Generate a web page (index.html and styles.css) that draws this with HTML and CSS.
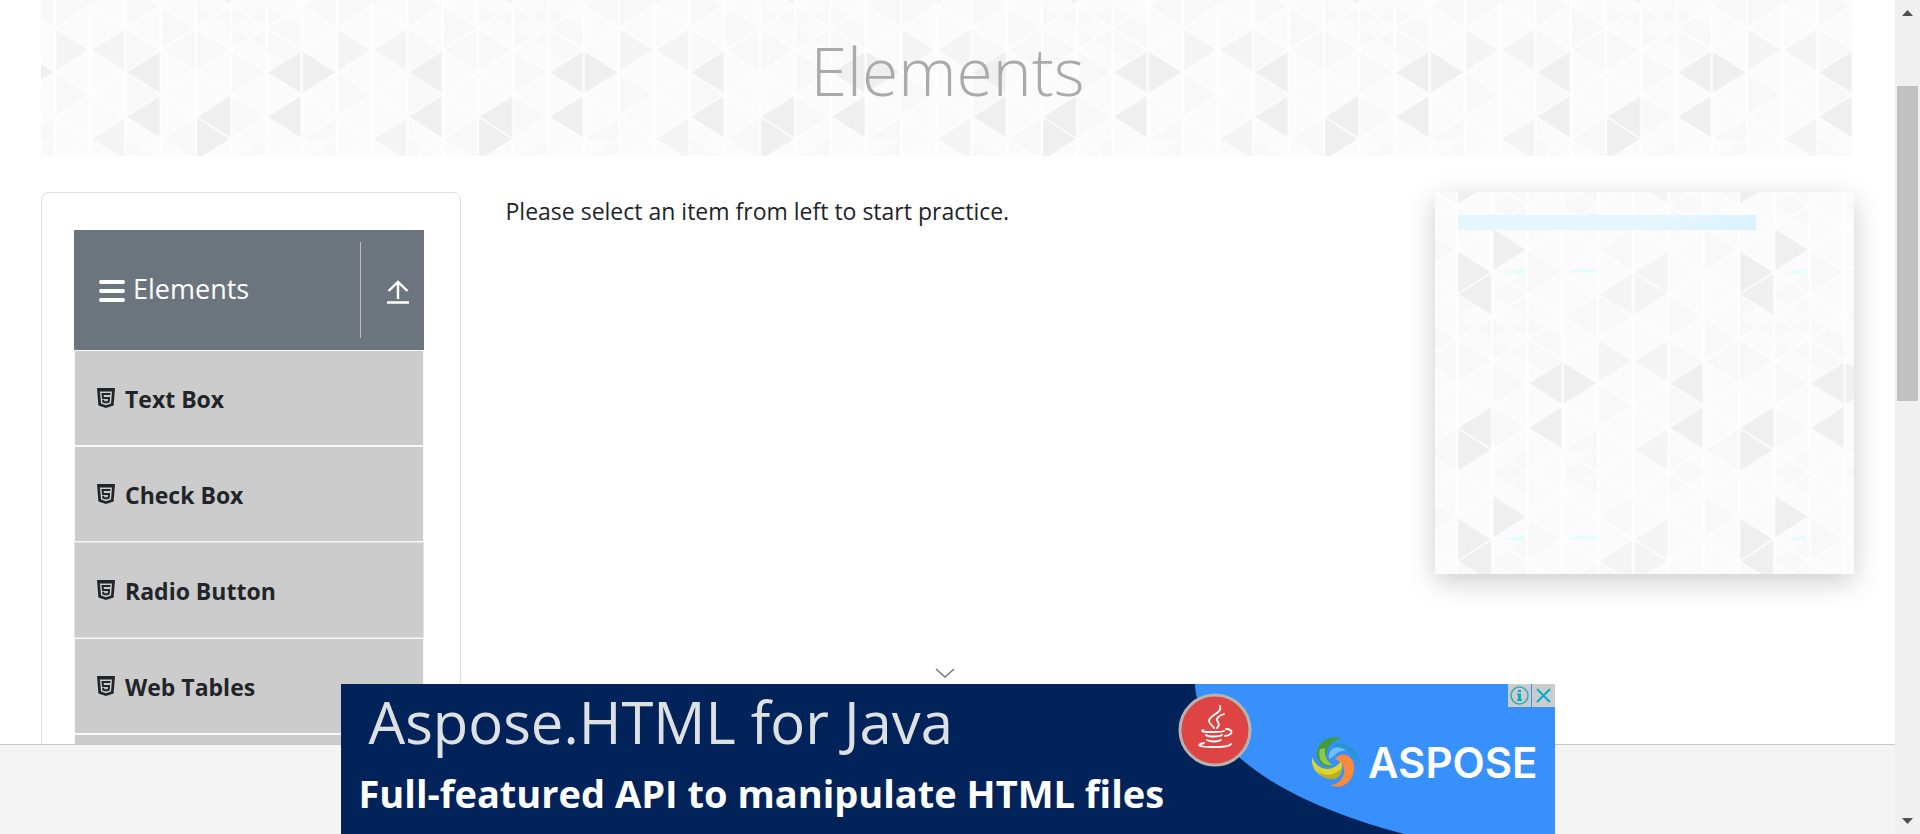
FILE: index.html
```html
<!DOCTYPE html>
<html lang="en">
<head>
<meta charset="utf-8">
<title>Elements</title>
<link rel="stylesheet" href="styles.css">
</head>
<body>
<svg class="sprite" aria-hidden="true">
  <symbol id="html5" viewBox="0 0 18 20">
    <path fill="#212529" fill-rule="evenodd" d="M0 0H18L16.600 17.400L9 20L1.400 17.400ZM3 3.500L4 15.500L9 17.200L14 15.500L15 3.500ZM4.500 5H13.500L13.300 7H6.700L6.900 9H13.100L12.600 14.400L9 15.600L5.400 14.400L5.200 11.800H7.200L7.300 13L9 13.500L10.700 13L10.900 11H5.100Z"/>
  </symbol>
</svg>
<div class="app">
  <div class="page">
    <header class="banner"><h1 class="banner-title">Elements</h1></header>
    <div class="row">
      <nav class="sidebar">
        <button class="group" type="button">
          <span class="group-text">
            <svg width="28" height="24" viewBox="0 0 28 24" stroke="#fff" stroke-width="4" stroke-linecap="round"><path d="M3 3H25M3 12H25M3 21H25"/></svg>
            <span class="group-label">Elements</span>
          </span>
          <span class="group-arrow">
            <svg width="22" height="24" viewBox="0 0 22 24" fill="none" stroke="#fff" stroke-width="2.400"><path d="M11 19V2M1.500 11L11 2L20.500 11M0 22.500H22"/></svg>
          </span>
        </button>
        <ul class="menu">
          <li><a class="item" href="#"><svg class="item-icon"><use href="#html5"/></svg>Text Box</a></li>
          <li><a class="item" href="#"><svg class="item-icon"><use href="#html5"/></svg>Check Box</a></li>
          <li><a class="item item-active" href="#"><svg class="item-icon"><use href="#html5"/></svg>Radio Button</a></li>
          <li><a class="item" href="#"><svg class="item-icon"><use href="#html5"/></svg>Web Tables</a></li>
          <li class="item" aria-hidden="true"></li>
        </ul>
      </nav>
      <main class="main">Please select an item from left to start practice.</main>
      <aside class="card"><div class="card-bar"></div></aside>
    </div>
  </div>
  <div class="scrollbar" aria-hidden="true">
    <svg width="11" height="6" viewBox="0 0 11 6"><path fill="#505050" d="M0 6L5.500 0L11 6Z"/></svg>
    <div class="track"><div class="thumb"></div></div>
    <svg width="11" height="6" viewBox="0 0 11 6"><path fill="#505050" d="M0 0L5.500 6L11 0Z"/></svg>
  </div>
  <footer class="ad-bar">
    <div class="ad">
      <button class="collapse" type="button" aria-label="Collapse"><svg width="20" height="10" viewBox="0 0 20 10" fill="none" stroke="#777" stroke-width="1.500"><path d="M1 1L10 9L19 1"/></svg></button>
      <svg class="ad-art" viewBox="0 0 1214 150">
        <path fill="#3790fb" d="M854 0C855 30 875 53 899 74C940 110 1000 133 1063 150H1214V0Z"/>
        <circle cx="874" cy="46" r="35" fill="#df4444" stroke="#b5b5ae" stroke-width="3"/>
        <g fill="none" stroke="#fff" stroke-linecap="round" stroke-width="1.800">
          <path d="M879 22C882 29 868 31 868 37C868 40 872 42 873 44"/>
          <path d="M883 30C877 32 874 35 877 38C879 41 877 43 876 44"/>
          <path d="M862 46C859 48 865 48 872 48C878 48 881 48 883 47M885 45C893 45 892 51 884 52M865 51C867 53 878 53 881 51M866 56C869 58 877 58 880 56M863 59C854 61 858 63 872 63C880 63 888 63 890 60"/>
        </g>
        <path fill="#3f9d3a" d="M1001 54C983 50 972 64 977 75C981 84 989 83 992 81C983 77 981 60 1001 54Z"/>
        <path fill="#8fc84f" d="M979 65C976 76 983 83 992 81C986 78 983 71 984 64Z"/>
        <path fill="#70bdf2" d="M988 75C986 63 1000 59 1009 67C1001 65 995 69 993 72Z"/>
        <path fill="#2795d0" d="M991 63C1002 54 1019 65 1019 82C1014 70 1003 62 991 63Z"/>
        <path fill="#ddd52f" d="M971 73C976 86 991 90 1000 77C1005 91 992 98 981 92C973 88 970 80 971 73Z"/>
        <path fill="#b8ae20" d="M972 81C980 93 991 94 1001 84C1001 96 989 98 981 92Z"/>
        <path fill="#fb8a3c" d="M994 75C1001 66 1012 72 1013 82C1014 96 1002 107 989 101C1002 101 1011 82 994 75Z"/>
      </svg>
      <div class="ad-copy">
        <div class="ad-title">Aspose.HTML for Java</div>
        <div class="ad-sub">Full-featured API to manipulate HTML files</div>
      </div>
      <div class="ad-brand">ASPOSE</div>
      <div class="ad-controls">
        <button class="ad-button" type="button" aria-label="Ad information"><svg width="19" height="19" viewBox="0 0 19 19"><circle cx="9.500" cy="9.500" r="8.500" fill="none" stroke="#1fb0c9" stroke-width="1.500"/><path fill="#00aecd" d="M8 4H11V6H8ZM7 7.500H11V13.500H12V15H7V13.500H8V9H7Z"/></svg></button>
        <button class="ad-button" type="button" aria-label="Close ad"><svg width="15" height="15" viewBox="0 0 15 15" stroke="#00aecd" stroke-width="2"><path d="M1 1L14 14M14 1L1 14"/></svg></button>
      </div>
    </div>
  </footer>
</div>
</body>
</html>
```

FILE: styles.css
```css
:root {
  --triangles: url("data:image/svg+xml,%3Csvg xmlns='http://www.w3.org/2000/svg' width='282' height='267' viewBox='0 0 8 12' preserveAspectRatio='none'%3E%3Crect width='8' height='12' fill='%23fbfbfb'/%3E%3Cpath fill='%23f8f8f8' d='M0 7V9L1 8ZM0 5V7L1 6ZM1 5V7L0 6ZM1 6V8L2 7ZM2 4V6L1 5ZM2 6V8L1 7ZM1 8V10L2 9ZM2 0V2L1 1ZM1 10V12L2 11ZM2 3V5L3 4ZM2 6V8L3 7ZM3 7V9L2 8ZM4 5V7L3 6ZM4 0V2L3 1ZM4 5V7L5 6ZM4 9V11L5 10ZM5 2V4L4 3ZM4 11V13L3 12ZM6 0V2L7 1ZM6 5V7L7 6ZM6 9V11L7 10ZM6 7V9L7 8ZM7 2V4L8 3ZM8 7V9L7 8ZM8 11V13L7 12ZM8 -1V1L7 0ZM7 6V8L8 7Z'/%3E%3Cpath fill='%23f4f4f4' d='M5 4V6L4 5ZM4 7V9L5 8ZM5 4V6L6 5ZM6 3V5L5 4ZM6 7V9L5 8ZM6 11V13L5 12ZM6 -1V1L5 0Z'/%3E%3Cpath fill='%23efefef' d='M0 3V5L1 4ZM1 4V6L0 5ZM1 10V12L0 11ZM0 11V13L1 12ZM0 -1V1L1 0ZM1 2V4L2 3ZM3 8V10L2 9ZM3 10V12L2 11ZM3 8V10L4 9ZM7 8V10L6 9ZM7 10V12L6 11Z'/%3E%3Cpath fill='%23e4fdfb' d='M1.300 4L1.900 3.850V4.100ZM3.100 4L3.500 3.850L4 3.900V4.050Z'/%3E%3Cpattern id='p' width='2' height='2' patternUnits='userSpaceOnUse'%3E%3Cpath fill='none' stroke='%23fff' stroke-opacity='.8' stroke-width='.07' d='M0 0V2M1 0V2M2 0V2M0 1L1 0L2 1L1 2Z'/%3E%3C/pattern%3E%3Crect width='8' height='12' fill='url(%23p)'/%3E%3C/svg%3E");
}

* { box-sizing: border-box; }

body {
  margin: 0;
  background: #fff;
  color: #212529;
  font-family: "Open Sans", "Noto Sans", sans-serif;
  font-size: 23px;
  line-height: 36px;
}

button {
  border: 0;
  padding: 0;
  color: inherit;
  font: inherit;
  cursor: pointer;
}

svg { display: block; }

.sprite { position: absolute; width: 0; height: 0; }

.app {
  position: relative;
  display: flex;
  height: 100vh;
  overflow: hidden;
}

.page { flex: 1; min-width: 0; padding: 0 41px; }

.banner {
  display: flex;
  justify-content: center;
  padding: 20px 0 36px;
  background: var(--triangles) 155px -128px;
}

.banner-title {
  margin: 0;
  color: #aaa;
  font-size: 66px;
  font-weight: 300;
  line-height: 100px;
}

.row {
  display: grid;
  grid-template-columns: repeat(4, minmax(0, 1fr));
  gap: 45px;
  align-items: start;
  margin-top: 36px;
}

.sidebar {
  padding: 37px 36px 36px 32px;
  border: 1px solid #dfdfdf;
  border-radius: 8px;
}

.group {
  display: flex;
  align-items: center;
  justify-content: space-between;
  width: 100%;
  height: 120px;
  background: #6c757d;
  color: #fff;
  font-size: 27px;
}

.group-text { display: flex; align-items: center; gap: 7px; padding: 2px 0 0 24px; }

.group-label { padding-bottom: 4px; }

.group-arrow {
  display: flex;
  align-items: center;
  height: 96px;
  padding: 4px 15px 0 26px;
  border-left: 1px solid #bbb;
}

.menu { margin: 0; padding: 0; list-style: none; }

.item {
  display: flex;
  align-items: center;
  gap: 10px;
  height: 96px;
  padding: 2px 22px 0;
  border: 1px solid #f8f9fa;
  background: #ccc;
  color: #212529;
  font-weight: 700;
  text-decoration: none;
}

.item-active { border-color: #dee2e6; }

.item-icon { width: 18px; height: 20px; margin-bottom: 2px; }

.main { grid-column: span 2; padding-top: 1px; }

.card {
  height: 382px;
  padding: 23px;
  background: var(--triangles) 22px -9px;
  box-shadow: 0 8px 26px rgba(0, 0, 0, 0.2);
}

.card-bar {
  width: 80%;
  height: 15px;
  background: linear-gradient(160deg, #e6f6ff 60%, #d9f1ff);
}

.scrollbar {
  display: flex;
  flex-direction: column;
  align-items: center;
  width: 25px;
  padding: 10px 2px;
  background: #f0f0f0;
}

.track { flex: 1; width: 100%; padding-top: 70px; }

.thumb { height: 315px; background: #c1c1c1; }

.ad-bar {
  position: absolute;
  right: 25px;
  bottom: 0;
  left: 0;
  display: flex;
  justify-content: center;
  height: 90px;
  border-top: 1px solid #c8c8c8;
  background: #f4f4f4;
}

.ad {
  position: relative;
  display: flex;
  align-items: center;
  justify-content: space-between;
  align-self: flex-end;
  flex: 0 0 1214px;
  height: 150px;
  padding: 0 17px 0 18px;
  background: #01235a;
}

.ad-art { position: absolute; inset: 0; width: 100%; height: 100%; }

.ad-copy, .ad-brand { position: relative; color: #fff; white-space: nowrap; }

.ad-copy { padding-bottom: 7px; }

.ad-title {
  padding-left: 10px;
  color: #dde1e3;
  font-size: 58px;
  line-height: 76px;
}

.ad-sub { font-size: 38px; font-weight: 700; line-height: 67px; }

.ad-brand {
  padding-top: 8px;
  font-family: Inter, sans-serif;
  font-size: 42px;
  font-weight: 600;
}

.ad-controls { position: absolute; top: 0; right: 0; display: flex; gap: 1px; }

.ad-button {
  display: grid;
  place-items: center;
  width: 23px;
  height: 23px;
  background: #ccc;
}

.collapse {
  position: absolute;
  top: -20px;
  left: 50%;
  margin-left: -13px;
  padding: 4px 0;
  background: none;
}
```
